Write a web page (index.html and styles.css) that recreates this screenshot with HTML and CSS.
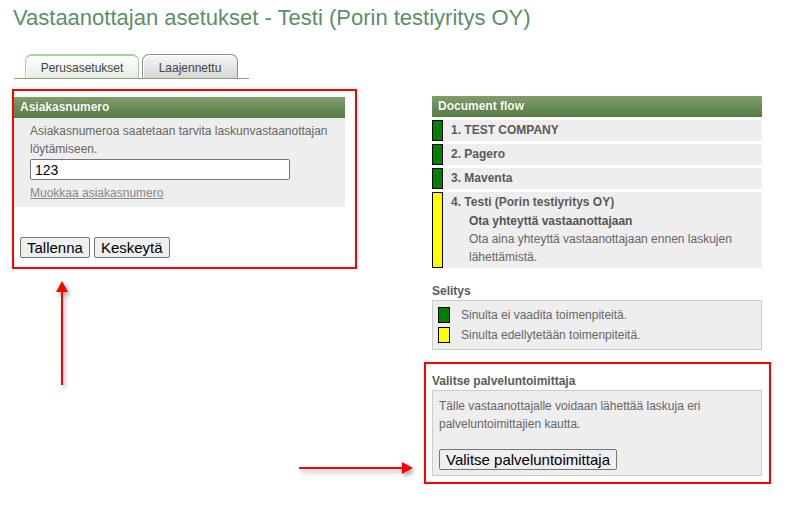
FILE: index.html
```html
<!DOCTYPE html>
<html lang="fi">
<head>
<meta charset="utf-8">
<title>Vastaanottajan asetukset</title>
<link rel="stylesheet" href="styles.css">
</head>
<body>
<div class="page">
  <h1 class="title">Vastaanottajan asetukset - Testi (Porin testiyritys OY)</h1>
  <div class="tabs">
    <div class="tab active">Perusasetukset</div>
    <div class="tab">Laajennettu</div>
  </div>
  <div class="columns">
    <div class="left">
      <div class="mark mark-left">
        <div class="panel">
          <div class="panel-head">Asiakasnumero</div>
          <div class="panel-body">
            <p class="text">Asiakasnumeroa saatetaan tarvita laskunvastaanottajan löytämiseen.</p>
            <input class="field" type="text" value="123">
            <a class="link" href="#">Muokkaa asiakasnumero</a>
          </div>
        </div>
        <div class="actions">
          <button class="btn">Tallenna</button>
          <button class="btn">Keskeytä</button>
        </div>
      </div>
    </div>
    <div class="right">
      <div class="flow">
        <div class="panel-head">Document flow</div>
        <div class="row"><span class="sq green"></span><div class="row-text"><b>1. TEST COMPANY</b></div></div>
        <div class="row"><span class="sq green"></span><div class="row-text"><b>2. Pagero</b></div></div>
        <div class="row"><span class="sq green"></span><div class="row-text"><b>3. Maventa</b></div></div>
        <div class="row"><span class="sq yellow"></span><div class="row-text"><b>4. Testi (Porin testiyritys OY)</b>
          <div class="note"><b>Ota yhteyttä vastaanottajaan</b><br>Ota aina yhteyttä vastaanottajaan ennen laskujen lähettämistä.</div></div></div>
      </div>
      <div class="legend-title">Selitys</div>
      <div class="legend">
        <div class="legend-row"><span class="lsq green"></span>Sinulta ei vaadita toimenpiteitä.</div>
        <div class="legend-row"><span class="lsq yellow"></span>Sinulta edellytetään toimenpiteitä.</div>
      </div>
      <div class="mark mark-right">
        <div class="legend-title">Valitse palveluntoimittaja</div>
        <div class="choose">
          <p class="text">Tälle vastaanottajalle voidaan lähettää laskuja eri palveluntoimittajien kautta.</p>
          <button class="btn btn-wide">Valitse palveluntoimittaja</button>
        </div>
      </div>
    </div>
  </div>
  <div class="arrow arrow-up"></div>
  <div class="arrow arrow-right"></div>
</div>
</body>
</html>
```
FILE: styles.css
```css
* { box-sizing: border-box; }
body {
  margin: 0;
  background: #fff;
  font-family: "Liberation Sans", Arial, sans-serif;
  font-size: 12px;
  color: #666;
}
.page {
  position: relative;
  width: 791px;
  height: 515px;
  padding: 4px 0 0 12px;
}
.title {
  margin: 0 0 0 1px;
  font-weight: normal;
  font-size: 22px;
  line-height: 28px;
  color: #5b8f68;
}
.tabs {
  display: flex;
  gap: 3px;
  margin: 22px 0 0 2px;
  width: 235px;
  padding-left: 11px;
  border-bottom: 1px solid #8aa77a;
}
.tab {
  height: 24px;
  padding: 6px 0 0;
  width: 96px;
  text-align: center;
  color: #444;
  font-size: 12px;
  border: 1px solid #8e8e8e;
  border-bottom: none;
  border-radius: 7px 7px 0 0;
  background: linear-gradient(#f6f6f6, #d6d6d6);
  box-shadow: inset 1px 1px 0 #fff;
}
.tab.active {
  width: 114px;
  border-color: #a9cfa9;
  background: linear-gradient(#ffffff, #e6ebe4);
  border-top: 2px solid #9fd39f;
  padding-top: 5px;
}
.columns {
  display: flex;
  margin-top: 10px;
}
.left { width: 412px; }
.mark {
  border: 2px solid #f00;
}
.mark-left {
  width: 345px;
  padding: 6px 10px 9px 0;
}
.panel-head {
  height: 21px;
  line-height: 21px;
  padding-left: 6px;
  color: #fff;
  font-weight: bold;
  font-size: 12px;
  background: linear-gradient(#7f9e6c, #587b45);
  text-shadow: 0 0 1px #3d5a2e;
}
.panel-body {
  background: #eee;
  padding: 4px 10px 5px 16px;
}
.text {
  margin: 0;
  line-height: 18px;
  font-size: 12px;
  color: #666;
}
.field {
  display: block;
  margin: 1px 0 4px;
  width: 260px;
  height: 21px;
  border: 1px solid #767676;
  border-radius: 2px;
  padding: 0 4px;
  font-family: "Liberation Sans", Arial, sans-serif;
  font-size: 14px;
  color: #000;
  background: #fff;
}
.link {
  color: #888;
  font-size: 12px;
  line-height: 18px;
}
.actions {
  display: flex;
  gap: 4px;
  margin: 30px 0 0 6px;
}
.btn {
  height: 21px;
  padding: 0 6px;
  font-family: "Liberation Sans", Arial, sans-serif;
  font-size: 15px;
  color: #000;
  background: #efefef;
  border: 1px solid #767676;
  border-radius: 2px;
}
.right {
  width: 347px;
  padding: 7px 0 0 8px;
}
.flow {
  width: 330px;
  display: flex;
  flex-direction: column;
  gap: 3px;
}
.row {
  display: flex;
  background: #eee;
}
.sq {
  flex: none;
  width: 11px;
  border: 1px solid #000;
}
.green { background: #008000; }
.yellow { background: #ffff00; }
.row-text {
  padding: 1px 0 2px 8px;
  line-height: 18px;
  color: #5a5a5a;
}
.row-text b { color: #5a5a5a; }
.note {
  padding-left: 18px;
  margin-top: 1px;
  line-height: 18px;
  color: #666;
}
.note b { color: #555; }
.legend-title {
  margin-top: 14px;
  font-weight: bold;
  color: #5a5a5a;
  line-height: 18px;
}
.legend {
  width: 330px;
  margin-top: 0;
  background: #eee;
  border: 1px solid #ccc;
  padding: 4px 0 4px 5px;
}
.legend-row {
  display: flex;
  align-items: center;
  height: 20px;
  color: #666;
}
.lsq {
  width: 12px;
  height: 16px;
  border: 1px solid #000;
  margin-right: 11px;
}
.mark-right {
  width: 347px;
  margin: 12px 0 0 -8px;
  padding: 0 7px 6px 6px;
}
.mark-right .legend-title { margin-top: 8px; }
.choose {
  background: #eee;
  border: 1px solid #ccc;
  padding: 6px 6px 5px 6px;
}
.btn-wide {
  margin-top: 16px;
  padding: 0 6px;
}
.arrow {
  position: absolute;
  background: #f00;
  filter: drop-shadow(2px 3px 2px rgba(0,0,0,0.35));
}
.arrow-up {
  left: 61px;
  top: 291px;
  width: 2px;
  height: 94px;
}
.arrow-up::before {
  content: "";
  position: absolute;
  left: -5px;
  top: -10px;
  border-left: 6px solid transparent;
  border-right: 6px solid transparent;
  border-bottom: 11px solid #f00;
}
.arrow-right {
  left: 299px;
  top: 467px;
  width: 103px;
  height: 2px;
}
.arrow-right::after {
  content: "";
  position: absolute;
  right: -11px;
  top: -5px;
  border-top: 6px solid transparent;
  border-bottom: 6px solid transparent;
  border-left: 11px solid #f00;
}
```
